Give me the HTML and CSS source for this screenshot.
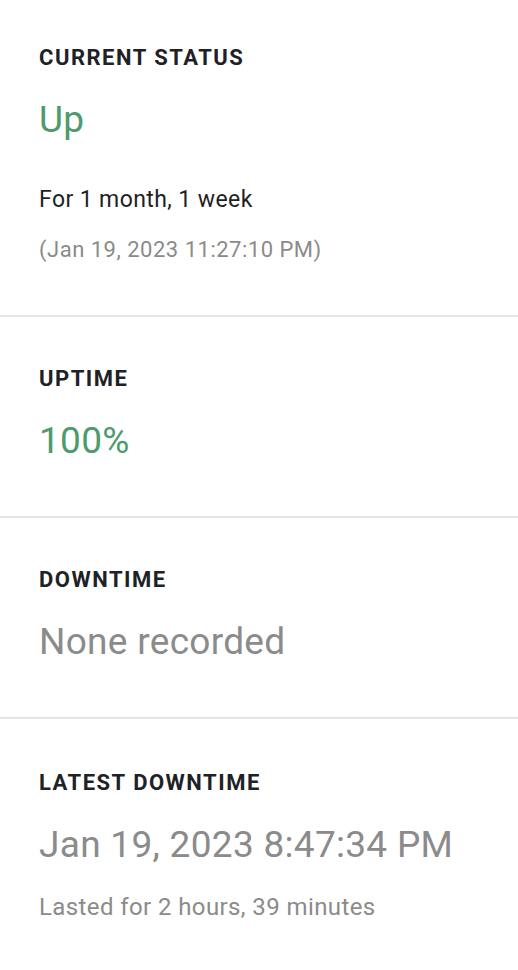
FILE: index.html
```html
<!DOCTYPE html>
<html>
<head>
<meta charset="utf-8">
<link rel="stylesheet" href="styles.css">
</head>
<body>
<main class="panel">
  <section class="stat first">
    <h2 class="stat-title">CURRENT STATUS</h2>
    <div class="stat-value up">Up</div>
    <p class="stat-detail dark since">For 1 month, 1 week</p>
    <p class="stat-detail muted stamp">(Jan 19, 2023 11:27:10 PM)</p>
  </section>
  <section class="stat">
    <h2 class="stat-title">UPTIME</h2>
    <div class="stat-value up">100%</div>
  </section>
  <section class="stat">
    <h2 class="stat-title">DOWNTIME</h2>
    <div class="stat-value muted">None recorded</div>
  </section>
  <section class="stat last">
    <h2 class="stat-title">LATEST DOWNTIME</h2>
    <div class="stat-value muted">Jan 19, 2023 8:47:34 PM</div>
    <p class="stat-detail muted lasted">Lasted for 2 hours, 39 minutes</p>
  </section>
</main>
</body>
</html>
```
FILE: styles.css
```css
html, body {
  margin: 0;
  padding: 0;
  background: #ffffff;
}
body {
  font-family: Roboto, "Liberation Sans", sans-serif;
}
.panel {
  display: flex;
  flex-direction: column;
}
.stat {
  box-sizing: border-box;
  padding: 49px 39px 0;
  height: 201px;
  border-bottom: 2px solid #e4e4e4;
}
.stat.first {
  padding-top: 45px;
  height: 317px;
}
.stat.last {
  padding-top: 51px;
  border-bottom: none;
  height: auto;
}
.stat-title {
  margin: 0;
  font-size: 22px;
  line-height: 26px;
  font-weight: 700;
  color: #1e2226;
  letter-spacing: 1.5px;
}
.stat-value {
  margin-top: 27px;
  font-size: 37px;
  line-height: 44px;
  font-weight: 400;
  letter-spacing: 0.3px;
}
.up { color: #4d9b6c; }
.muted { color: #8b8b8b; }
.dark { color: #1f1f1f; }
.stat-detail {
  margin: 0;
  line-height: 30px;
}
.stat-detail.since {
  margin-top: 43px;
  font-size: 23px;
  letter-spacing: 0.4px;
}
.stat-detail.stamp {
  margin-top: 20px;
  font-size: 22px;
  letter-spacing: 0.5px;
}
.stat-detail.lasted {
  margin-top: 25px;
  font-size: 24px;
  letter-spacing: 0.4px;
}
```
